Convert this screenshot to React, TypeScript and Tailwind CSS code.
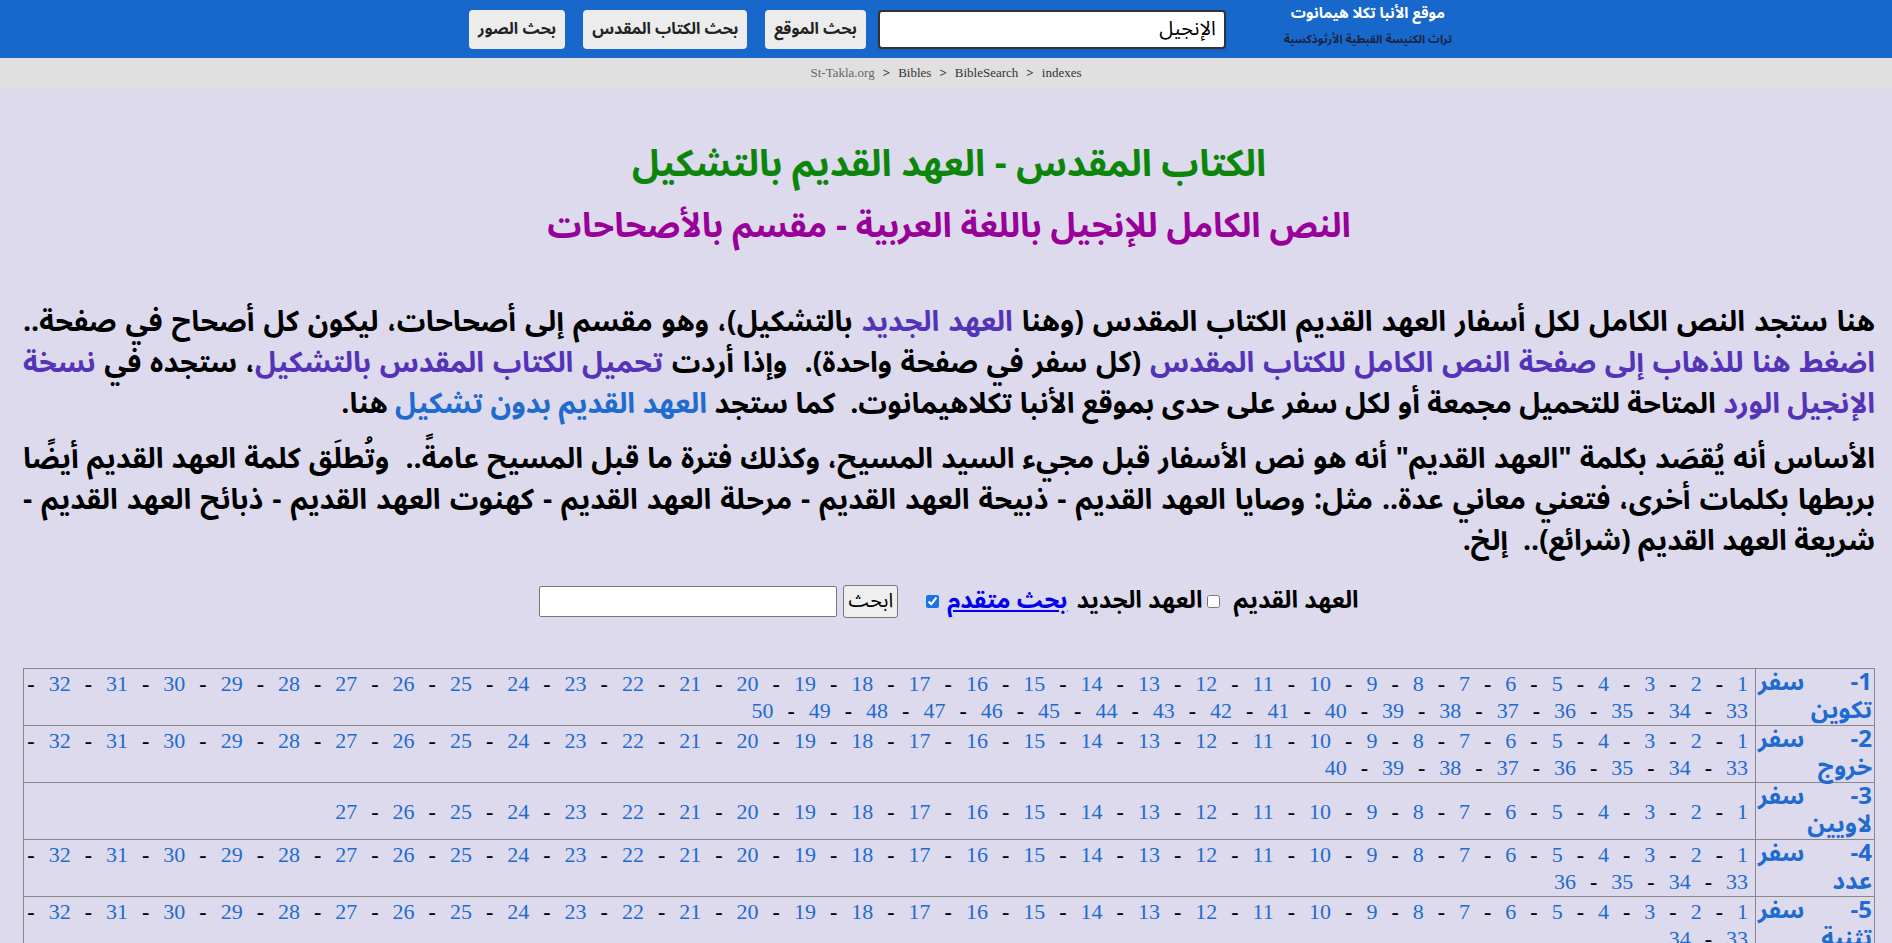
import React from "react";

const arabic = "font-['Noto_Sans_Arabic','DejaVu_Sans',sans-serif]";

const books: [string, number][] = [
  ["تكوين", 50],
  ["خروج", 40],
  ["لاويين", 27],
  ["عدد", 36],
  ["تثنية", 34],
  ["يشوع", 24],
  ["قضاة", 21],
  ["راعوث", 4],
  ["صموئيل الأول", 31],
  ["صموئيل الثاني", 24],
  ["ملوك الأول", 22],
  ["ملوك الثاني", 25],
  ["أخبار الأيام الأول", 29],
  ["أخبار الأيام الثاني", 36],
  ["عزرا", 10],
  ["نحميا", 13],
  ["أستير", 10],
  ["أيوب", 42],
  ["مزامير", 151],
  ["أمثال", 31],
  ["جامعة", 12],
  ["نشيد الأنشاد", 8],
  ["إشعياء", 66],
  ["إرميا", 52],
  ["مراثي إرميا", 5],
  ["حزقيال", 48],
  ["دانيال", 14],
  ["هوشع", 14],
  ["يوئيل", 3],
  ["عاموس", 9],
  ["عوبديا", 1],
  ["يونان", 4],
  ["ميخا", 7],
  ["ناحوم", 3],
  ["حبقوق", 3],
  ["صفنيا", 3],
  ["حجي", 2],
  ["زكريا", 14],
  ["ملاخي", 4],
];

const TopButton = ({ label }: { label: string }) => (
  <button className="h-[39px] px-[9px] rounded-[4px] bg-[#ececec] text-[#222] text-[16px] font-bold whitespace-nowrap">
    {label}
  </button>
);

const ChapterLinks = ({ count }: { count: number }) => {
  const items = Array.from({ length: count }, (_, i) => i + 1);
  return (
    <>
      {items.map((n) => (
        <React.Fragment key={n}>
          <a href="#" className="text-[#1f6bd0]">
            {n}
          </a>
          {n < count && <span className="font-bold text-black"> - </span>}{" "}
        </React.Fragment>
      ))}
    </>
  );
};

export default function App() {
  return (
    <div dir="rtl" className={`min-h-screen bg-[#dcdaec] ${arabic}`}>
      {/* top bar */}
      <header className="h-[58px] bg-[#1868cc] flex items-center justify-center gap-[18px] pl-[28px]">
        <div className="w-[166px] flex flex-col items-center whitespace-nowrap -mt-[8px] ml-[41px]">
          <span className="text-white font-bold text-[15px] leading-[20px]">موقع الأنبا تكلا هيمانوت</span>
          <span className="text-[#1b2540] font-bold text-[11.5px] leading-[16px] mt-[8px]">
            تراث الكنيسة القبطية الأرثوذكسية
          </span>
        </div>
        <div className="w-[348px] h-[39px] bg-white border-2 border-[#333] rounded-[4px] shadow-sm flex items-center px-[8px] text-[20px] text-black ml-[-6px]">
          الإنجيل
        </div>
        <TopButton label="بحث الموقع" />
        <TopButton label="بحث الكتاب المقدس" />
        <TopButton label="بحث الصور" />
      </header>

      {/* breadcrumb */}
      <nav
        dir="ltr"
        className="h-[30px] bg-[#e0e0e0] flex items-center justify-center gap-[8px] text-[13px] font-['Liberation_Serif',serif] text-[#333]"
      >
        <a href="#" className="text-[#666]">St-Takla.org</a>
        <span className="font-bold">&gt;</span>
        <a href="#">Bibles</a>
        <span className="font-bold">&gt;</span>
        <a href="#">BibleSearch</a>
        <span className="font-bold">&gt;</span>
        <a href="#">indexes</a>
      </nav>

      <main className="pl-[23px] pr-[17px] pb-10">
        <h1 className="mt-[52px] text-center text-[#0b860b] text-[37px] font-bold leading-[48px]">
          الكتاب المقدس - العهد القديم بالتشكيل
        </h1>
        <h2 className="mt-[14px] text-center text-[#990099] text-[34px] font-bold leading-[48px]">
          النص الكامل للإنجيل باللغة العربية - مقسم بالأصحاحات
        </h2>

        <p className="mt-[52px] text-[28.5px] font-bold leading-[41px] text-black text-justify">
          هنا ستجد النص الكامل لكل أسفار العهد القديم الكتاب المقدس (وهنا{" "}
          <a href="#" className="text-[#5533b8]">العهد الجديد</a> بالتشكيل)، وهو مقسم إلى أصحاحات، ليكون كل أصحاح
          في صفحة..{" "}
          <a href="#" className="text-[#5533b8]">اضغط هنا للذهاب إلى صفحة النص الكامل للكتاب المقدس</a> (كل سفر
          في صفحة واحدة).&nbsp; وإذا أردت{" "}
          <a href="#" className="text-[#5533b8]">تحميل الكتاب المقدس بالتشكيل</a>، ستجده في{" "}
          <a href="#" className="text-[#5533b8]">نسخة الإنجيل الورد</a> المتاحة للتحميل مجمعة أو لكل سفر على حدى
          بموقع الأنبا تكلاهيمانوت.&nbsp; كما ستجد{" "}
          <a href="#" className="text-[#1f6bd0]">العهد القديم بدون تشكيل</a> هنا.
        </p>
        <p className="mt-[14px] text-[28.5px] font-bold leading-[41px] text-black text-justify">
          الأساس أنه يُقصَد بكلمة "العهد القديم" أنه هو نص الأسفار قبل مجيء السيد المسيح، وكذلك فترة ما قبل
          المسيح عامةً..&nbsp; وتُطلَق كلمة العهد القديم أيضًا بربطها بكلمات أخرى، فتعني معاني عدة.. مثل: وصايا
          العهد القديم - ذبيحة العهد القديم - مرحلة العهد القديم - كهنوت العهد القديم - ذبائح العهد القديم -
          شريعة العهد القديم (شرائع)..&nbsp; إلخ.
        </p>

        {/* search form */}
        <form dir="ltr" className="mt-[22px] flex items-center justify-center h-[34px] text-[24px] font-bold">
          <input type="text" className="w-[298px] h-[31px] bg-white border border-[#777] rounded-[2px]" />
          <button
            type="button"
            className="ml-[6px] h-[33px] px-[4px] bg-[#efefef] border border-[#777] rounded-[3px] text-[20px] font-normal"
          >
            ابحث
          </button>
          <input type="checkbox" defaultChecked className="ml-[28px] w-[13px] h-[13px] accent-[#1a73e8]" />
          <a href="#" className="ml-[8px] text-[#0000ee] underline">بحث متقدم</a>
          <span className="ml-[9px]">العهد الجديد</span>
          <input type="checkbox" className="ml-[5px] w-[13px] h-[13px]" />
          <span className="ml-[13px]">العهد القديم</span>
        </form>

        {/* books table */}
        <table className="mt-[50px] w-full border-collapse border border-[#888]">
          <tbody>
            {books.map(([name, count], i) => (
              <tr key={name}>
                <td className="w-[119px] border border-[#888] px-[2px] align-top text-justify text-[24px] leading-[28px] font-bold">
                  <a href="#" className="text-[#1f6bd0]">
                    {i + 1}- سفر {name}
                  </a>
                </td>
                <td className="border border-[#888] pr-[7px] pl-[1px] align-middle text-[22px] leading-[27px] font-['Liberation_Serif',serif] [word-spacing:8.5px]">
                  <ChapterLinks count={count} />
                </td>
              </tr>
            ))}
          </tbody>
        </table>
      </main>
    </div>
  );
}
